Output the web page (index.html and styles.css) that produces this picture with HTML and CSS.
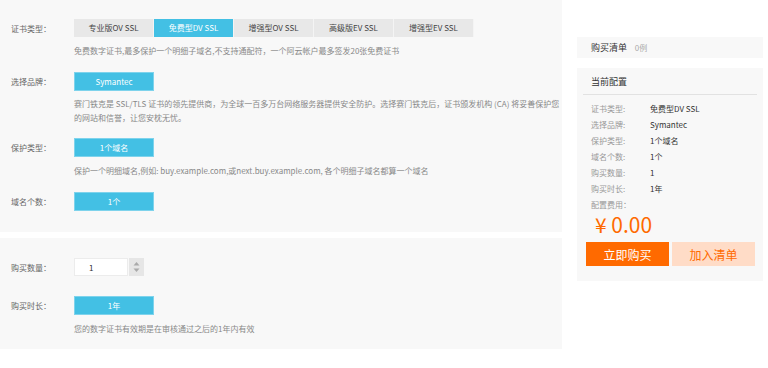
FILE: index.html
```html
<!DOCTYPE html>
<html lang="zh-CN">
<head>
    <meta charset="UTF-8">
    <meta name="viewport" content="width=device-width, initial-scale=1.0">
    <title>SSL证书购买</title>
    <link rel="stylesheet" href="styles.css">
</head>
<body>
    <div class="page">
        <div class="main">
            <div class="panel panel-config">
                <div class="row">
                    <span class="label">证书类型：</span>
                    <div class="tabs">
                        <span class="tab">专业版OV SSL</span>
                        <span class="tab active">免费型DV SSL</span>
                        <span class="tab">增强型OV SSL</span>
                        <span class="tab">高级版EV SSL</span>
                        <span class="tab">增强型EV SSL</span>
                    </div>
                </div>
                <p class="desc">免费数字证书,最多保护一个明细子域名,不支持通配符，一个阿云帐户最多签发20张免费证书</p>

                <div class="row gap-lg">
                    <span class="label">选择品牌：</span>
                    <span class="opt">Symantec</span>
                </div>
                <p class="desc desc-tight">赛门铁克是 SSL/TLS 证书的领先提供商，为全球一百多万台网络服务器提供安全防护。选择赛门铁克后，证书颁发机构 (CA) 将妥善保护您<br>的网站和信誉，让您安枕无忧。</p>

                <div class="row gap-md">
                    <span class="label">保护类型：</span>
                    <span class="opt">1个域名</span>
                </div>
                <p class="desc">保护一个明细域名,例如: buy.example.com,或next.buy.example.com, 各个明细子域名都算一个域名</p>

                <div class="row gap-lg">
                    <span class="label">域名个数：</span>
                    <span class="opt">1个</span>
                </div>
            </div>

            <div class="panel panel-buy">
                <div class="row">
                    <span class="label">购买数量：</span>
                    <div class="qty">
                        <input type="text" value="1">
                        <span class="spin">
                            <svg width="7" height="12" viewBox="0 0 7 12"><path d="M3.5 1 L6.5 4.5 H0.5 Z" fill="#aaa"/><path d="M3.5 11 L6.5 7.5 H0.5 Z" fill="#aaa"/></svg>
                        </span>
                    </div>
                </div>
                <div class="row gap-xl">
                    <span class="label">购买时长：</span>
                    <span class="opt">1年</span>
                </div>
                <p class="desc">您的数字证书有效期是在审核通过之后的1年内有效</p>
            </div>
        </div>

        <div class="side">
            <div class="box cart">
                <span class="cart-title">购买清单</span>
                <span class="cart-count">0例</span>
            </div>
            <div class="box summary">
                <div class="summary-title">当前配置</div>
                <ul class="summary-list">
                    <li><span>证书类型:</span>免费型DV SSL</li>
                    <li><span>选择品牌:</span>Symantec</li>
                    <li><span>保护类型:</span>1个域名</li>
                    <li><span>域名个数:</span>1个</li>
                    <li><span>购买数量:</span>1</li>
                    <li><span>购买时长:</span>1年</li>
                </ul>
                <div class="fee-label">配置费用：</div>
                <div class="price">¥ 0.00</div>
                <div class="actions">
                    <button class="btn-buy">立即购买</button>
                    <button class="btn-add">加入清单</button>
                </div>
            </div>
        </div>
    </div>
</body>
</html>
```

FILE: styles.css
```css
body { margin: 0; background: #fff; font-family: "Noto Sans CJK SC", "Liberation Sans", sans-serif; font-size: 8px; color: #666; }
.page { display: flex; width: 768px; }
.main { width: 562px; }
.side { width: 206px; }

.panel { background: #f8f8f8; }
.panel-config { padding-top: 19px; padding-bottom: 21px; }
.panel-buy { margin-top: 6px; padding-top: 20px; padding-bottom: 13px; }

.row { display: flex; align-items: center; }
.gap-md { margin-top: 13px; }
.gap-lg { margin-top: 14px; }
.gap-xl { margin-top: 20px; }
.label { width: 63px; padding-left: 11px; color: #666; }

.tabs { display: flex; }
.tab { width: 79px; height: 18px; line-height: 18px; text-align: center; background: #e8e8e8; color: #444; border-right: 1px solid #f4f4f4; }
.tab.active { background: #43c0e4; color: #fff; }

.opt { width: 78px; height: 17px; line-height: 17px; text-align: center; background: #43c0e4; color: #fff; border: 1px solid #7ed3ec; }

.desc { margin: 7px 0 0 74px; line-height: 14px; color: #888; white-space: nowrap; }
.desc-tight { margin-top: 6px; }

.qty { display: flex; height: 18px; }
.qty input { width: 38px; height: 16px; padding: 0 0 0 14px; border: 1px solid #ececec; background: #fff; font: inherit; color: #333; outline: none; }
.spin { width: 15px; margin-left: 1px; background: #e6e6e6; display: flex; align-items: center; justify-content: center; }

.box { margin-left: 15px; width: 186px; background: #f8f8f8; }
.cart { margin-top: 37px; height: 21px; line-height: 21px; padding-left: 14px; width: 172px; }
.cart-title { font-size: 9px; color: #333; }
.cart-count { margin-left: 6px; color: #aaa; }

.summary { margin-top: 10px; padding: 7px 0 15px; }
.summary-title { margin: 0 6px; padding: 0 0 5px 8px; line-height: 14px; font-size: 9px; color: #333; border-bottom: 1px solid #e2e2e2; }
.summary-list { list-style: none; margin: 6px 0 0; padding: 0 0 0 14px; }
.summary-list li { line-height: 16px; color: #333; }
.summary-list span { display: inline-block; width: 59px; color: #999; }
.fee-label { padding-left: 14px; line-height: 16px; color: #999; }
.price { padding-left: 18px; line-height: 22px; font-size: 21px; color: #ff6a00; }
.actions { display: flex; gap: 3px; margin-top: 7px; padding-left: 9px; }
.actions button { width: 83px; height: 24px; border: none; font-family: inherit; font-size: 12px; cursor: pointer; }
.btn-buy { background: #ff6a00; color: #fff; }
.btn-add { background: #ffdcc7; color: #ff6a00; }
```
